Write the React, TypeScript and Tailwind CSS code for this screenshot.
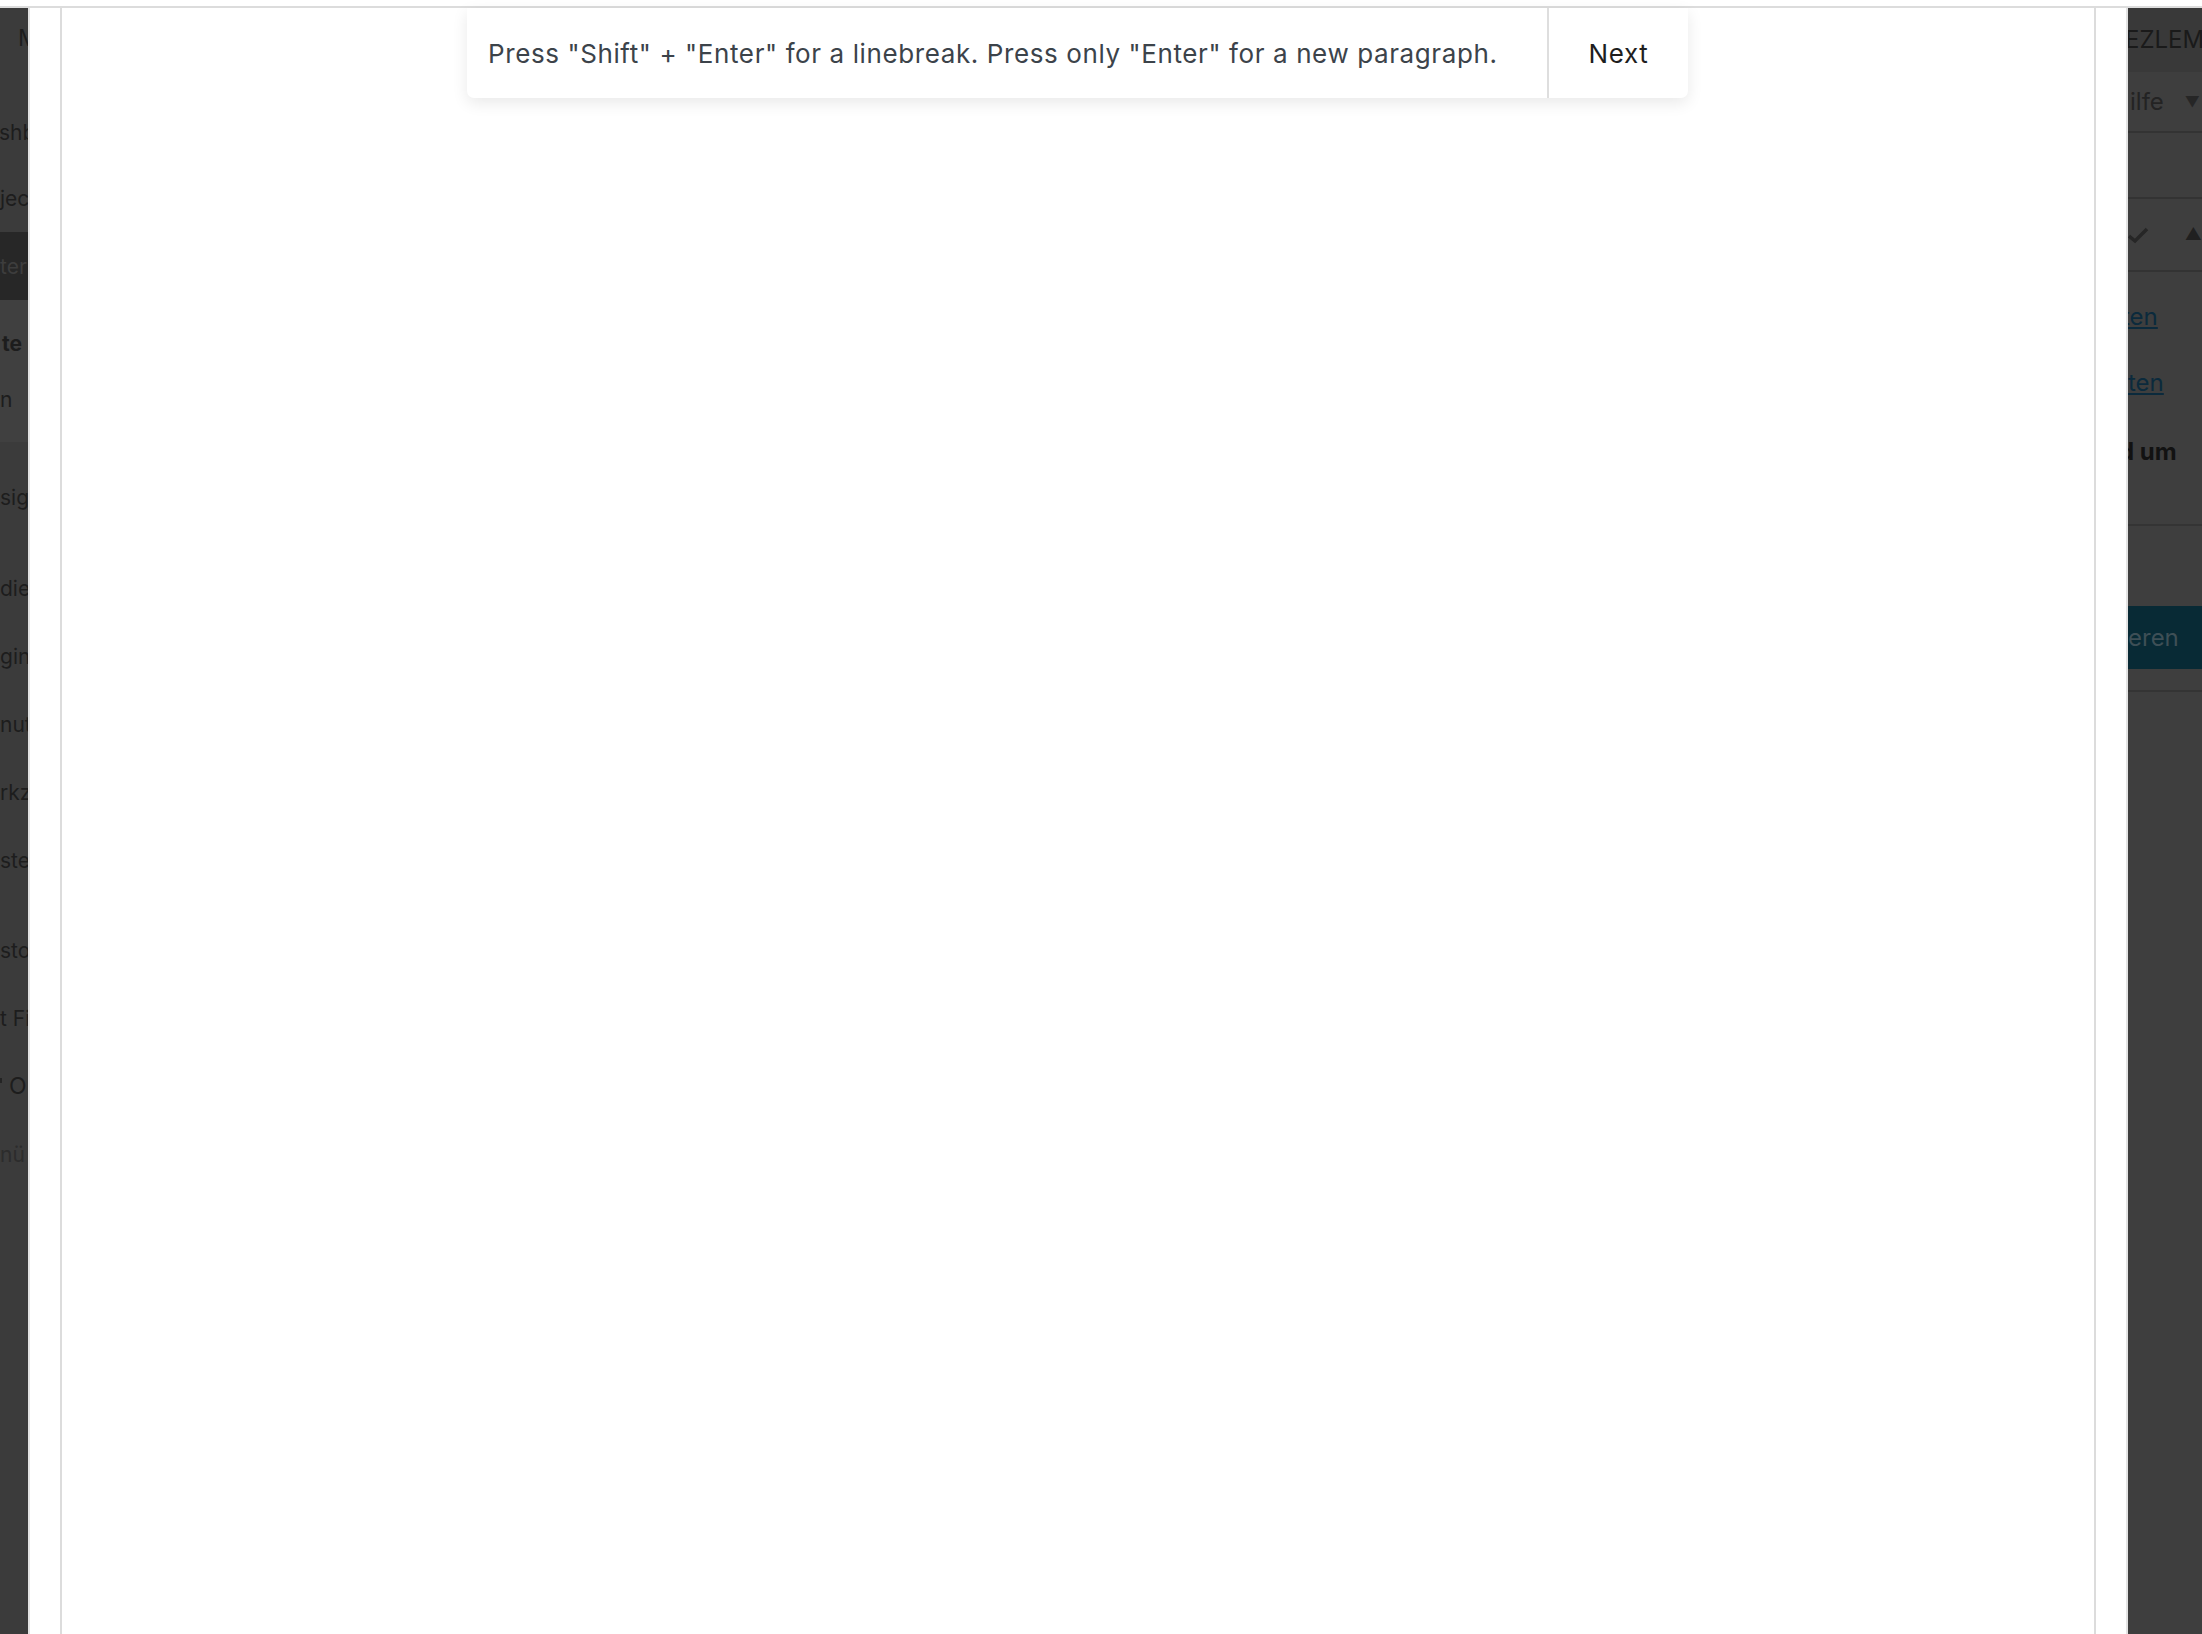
import React from "react";

// sidebar fragments, clipped by the overlay panel on the right
function MenuRow({ text, className }: { text: string; className: string }) {
  return (
    <div className={`flex items-center overflow-hidden whitespace-nowrap ${className}`}>
      {text}
    </div>
  );
}

function LeftMenu() {
  return (
    <div className="flex w-[28px] shrink-0 flex-col overflow-hidden bg-[#3b3b3b] text-[21px] leading-none text-[#1d1d1d]">
      <div className="flex h-[60px] items-center">
        <span className="h-[4px] w-[3px] bg-[#2a2a2a]" />
        <span className="ml-[18px] whitespace-nowrap text-[23px]">My</span>
      </div>
      <MenuRow text="shbo" className="mt-[35px] h-[58px] -ml-[1px]" />
      <MenuRow text="jects" className="mt-[8px] h-[58px]" />
      <MenuRow text="ter" className="mt-[5px] h-[68px] bg-[#272727] text-[#3d3d3d]" />
      <div className="flex h-[142px] flex-col bg-[#404040] pt-[12px]">
        <MenuRow text="te" className="h-[62px] pl-[2px] font-bold" />
        <MenuRow text="n" className="h-[50px]" />
      </div>
      <MenuRow text="sign" className="mt-[21px] h-[68px]" />
      <MenuRow text="dien" className="mt-[23px] h-[68px]" />
      <MenuRow text="gin" className="h-[68px]" />
      <MenuRow text="nutz" className="h-[68px]" />
      <MenuRow text="rkze" className="h-[68px]" />
      <MenuRow text="stel" className="h-[68px]" />
      <MenuRow text="stom" className="mt-[22px] h-[68px]" />
      <MenuRow text="t Fi" className="h-[68px]" />
      <div className="flex h-[68px] items-center">
        <span className="-mt-[12px] h-[5px] w-[2px] bg-[#242424]" />
        <span className="ml-[7px] text-[23px]">O</span>
      </div>
      <MenuRow text="nü" className="h-[68px] text-[#2c2c2c]" />
    </div>
  );
}

function RightPanel() {
  return (
    <div className="flex w-[74px] shrink-0 flex-col overflow-hidden bg-[#3e3e3e] text-[24px] leading-none text-[#232323]">
      <div className="flex h-[64px] items-center bg-[#393939] text-[#1a1a1a]">
        <span className="-ml-[3px] whitespace-nowrap">EZLEME</span>
      </div>
      <div className="flex h-[59px] items-center justify-between pl-[2px] pr-[2px]">
        <span>ilfe</span>
        <span className="text-[15px] text-[#262626]">▼</span>
      </div>
      <div className="h-[2px] bg-[#333333]" />
      <div className="h-[64px]" />
      <div className="h-[2px] bg-[#333333]" />
      <div className="flex h-[71px] items-center justify-between">
        <svg width="24" height="18" viewBox="0 0 24 18" className="-ml-[2px]">
          <path d="M3 10 L9 15 L21 3" fill="none" stroke="#262626" strokeWidth="3.5" />
        </svg>
        <span className="text-[17px] text-[#202020]">▲</span>
      </div>
      <div className="h-[2px] bg-[#333333]" />
      <div className="flex flex-col pt-[18px]">
        <div className="flex h-[54px] items-center">
          <span className="-ml-[6px] text-[#0b2a3c] underline">ten</span>
        </div>
        <div className="mt-[12px] flex h-[54px] items-center">
          <span className="text-[#0b2a3c] underline">ten</span>
        </div>
        <div className="mt-[15px] flex h-[54px] items-center whitespace-nowrap font-bold text-[#121212]">
          <span className="-ml-[9px]">d um</span>
        </div>
        <div className="h-[45px]" />
      </div>
      <div className="h-[2px] bg-[#343434]" />
      <div className="h-[80px]" />
      <div className="flex h-[63px] items-center bg-[#082a35] text-[#3e4f56]">
        <span className="whitespace-nowrap">eren</span>
      </div>
      <div className="h-[21px]" />
      <div className="h-[2px] bg-[#343434]" />
    </div>
  );
}

function Toast() {
  return (
    <div className="absolute left-[467px] top-0 flex h-[90px] w-[1221px] rounded-b-[7px] bg-white shadow-[0_5px_16px_rgba(0,0,0,0.09)]">
      <div className="flex flex-1 items-center pl-[21px] text-[26px] tracking-[0.6px] text-[#3c434a]">
        Press "Shift" + "Enter" for a linebreak. Press only "Enter" for a new paragraph.
      </div>
      <div className="flex w-[141px] items-center justify-center border-l-2 border-[#dedede] text-[26px] tracking-[0.6px] text-[#1e1e1e]">
        Next
      </div>
    </div>
  );
}

export default function App() {
  return (
    <div className="flex h-screen w-full flex-col overflow-hidden bg-white font-['Inter',sans-serif]">
      <div className="h-[6px] shrink-0 bg-white" />
      <div className="h-[2px] shrink-0 bg-[#dcdcdc]" />
      <div className="relative flex min-h-0 flex-1">
        <LeftMenu />
        <div className="flex flex-1 border-x-2 border-[#e2e2e2] bg-white px-[30px]">
          <div className="flex-1 border-x-2 border-[#dcdcdc] bg-white" />
        </div>
        <RightPanel />
        <Toast />
      </div>
    </div>
  );
}
